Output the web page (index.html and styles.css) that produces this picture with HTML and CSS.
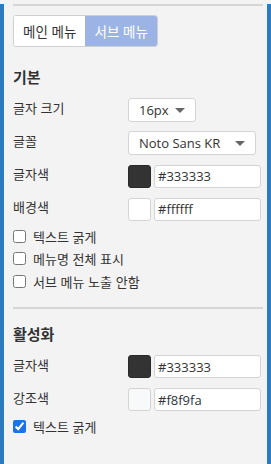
FILE: index.html
```html
<!DOCTYPE html>
<html lang="ko">
<head>
    <meta charset="UTF-8">
    <meta name="viewport" content="width=device-width, initial-scale=1.0">
    <title>메뉴 설정</title>
    <link rel="stylesheet" href="styles.css">
</head>
<body>
    <div class="panel">
        <div class="panel-inner">
            <div class="tabs">
                <button class="tab">메인 메뉴</button>
                <button class="tab active">서브 메뉴</button>
            </div>

            <!-- 기본 -->
            <section class="group">
                <h3>기본</h3>
                <div class="row">
                    <label>글자 크기</label>
                    <div class="select small"><span>16px</span><i class="caret"></i></div>
                </div>
                <div class="row">
                    <label>글꼴</label>
                    <div class="select wide"><span>Noto Sans KR</span><i class="caret"></i></div>
                </div>
                <div class="row">
                    <label>글자색</label>
                    <div class="color">
                        <span class="swatch dark"></span>
                        <input type="text" value="#333333">
                    </div>
                </div>
                <div class="row">
                    <label>배경색</label>
                    <div class="color">
                        <span class="swatch white"></span>
                        <input type="text" value="#ffffff">
                    </div>
                </div>
                <div class="checks">
                    <label class="check"><input type="checkbox"> 텍스트 굵게</label>
                    <label class="check"><input type="checkbox"> 메뉴명 전체 표시</label>
                    <label class="check"><input type="checkbox"> 서브 메뉴 노출 안함</label>
                </div>
            </section>

            <hr class="sep">

            <!-- 활성화 -->
            <section class="group active-group">
                <h3>활성화</h3>
                <div class="row">
                    <label>글자색</label>
                    <div class="color">
                        <span class="swatch dark"></span>
                        <input type="text" value="#333333">
                    </div>
                </div>
                <div class="row">
                    <label>강조색</label>
                    <div class="color">
                        <span class="swatch light"></span>
                        <input type="text" value="#f8f9fa">
                    </div>
                </div>
                <div class="checks">
                    <label class="check"><input type="checkbox" checked> 텍스트 굵게</label>
                </div>
            </section>
        </div>
    </div>
</body>
</html>
```

FILE: styles.css
```css
html, body {
    margin: 0;
    padding: 0;
    height: 100%;
}
body {
    font-family: "Noto Sans CJK KR", "Noto Sans", sans-serif;
    color: #333;
    background: #f3f3f3;
}
.panel {
    box-sizing: border-box;
    height: 464px;
    border: 4px solid #2a7bbf;
    border-top: 0;
    background: #f3f3f3;
}
.panel-inner {
    margin: 4px 0 0 9px;
    width: 250px;
    border-top: 2px solid #d6d6d6;
}
.tabs {
    display: inline-flex;
    margin-top: 9px;
    border: 1px solid #cfcfcf;
    border-radius: 3px;
    background: #fff;
    overflow: hidden;
}
.tab {
    font-family: inherit;
    font-size: 13.5px;
    color: #333;
    background: #fff;
    border: 0;
    height: 30px;
    padding: 0 9px;
    line-height: 30px;
}
.tab.active {
    background: #9cb4e5;
    color: #fff;
}
h3 {
    margin: 0;
    font-size: 15px;
    font-weight: 700;
    line-height: 20px;
}
.group {
    margin-top: 20px;
}
.row {
    display: flex;
    align-items: center;
    height: 24px;
    margin-top: 9px;
}
.group h3 + .row {
    margin-top: 11px;
}
.row label {
    width: 115px;
    font-size: 13px;
    line-height: 18px;
    margin-top: -4px;
}
.select {
    box-sizing: border-box;
    height: 24px;
    display: flex;
    align-items: center;
    justify-content: space-between;
    border: 1px solid #d4d4d4;
    border-radius: 3px;
    background: #fff;
    padding: 0 10px;
    font-family: "Open Sans", "Noto Sans", sans-serif;
    font-size: 13px;
}
.select.small { width: 68px; }
.select.wide { width: 128px; }
.caret {
    width: 0;
    height: 0;
    border-left: 5px solid transparent;
    border-right: 5px solid transparent;
    border-top: 5px solid #666;
}
.color {
    display: flex;
    gap: 3px;
    height: 23px;
}
.swatch {
    box-sizing: border-box;
    width: 23px;
    height: 23px;
    border: 1px solid #d4d4d4;
    border-radius: 3px;
}
.swatch.dark { background: #333; border-color: #2a2a2a; }
.swatch.white { background: #fff; }
.swatch.light { background: #f8f9fa; }
.color input {
    box-sizing: border-box;
    width: 107px;
    height: 23px;
    margin: 0;
    border: 1px solid #d4d4d4;
    border-radius: 3px;
    padding: 0 3px;
    font-family: "Open Sans", "Noto Sans", sans-serif;
    font-size: 13px;
    color: #333;
    background: #fff;
}
.checks {
    margin-top: 4px;
}
.check {
    display: flex;
    align-items: center;
    height: 22.5px;
    font-size: 13px;
}
.check input {
    width: 13px;
    height: 13px;
    margin: 0 7px 0 0;
    accent-color: #1a73e8;
}
.sep {
    border: 0;
    border-top: 2px solid #d6d6d6;
    margin: 14px 0 0;
}
.active-group {
    margin-top: 15px;
}
```
